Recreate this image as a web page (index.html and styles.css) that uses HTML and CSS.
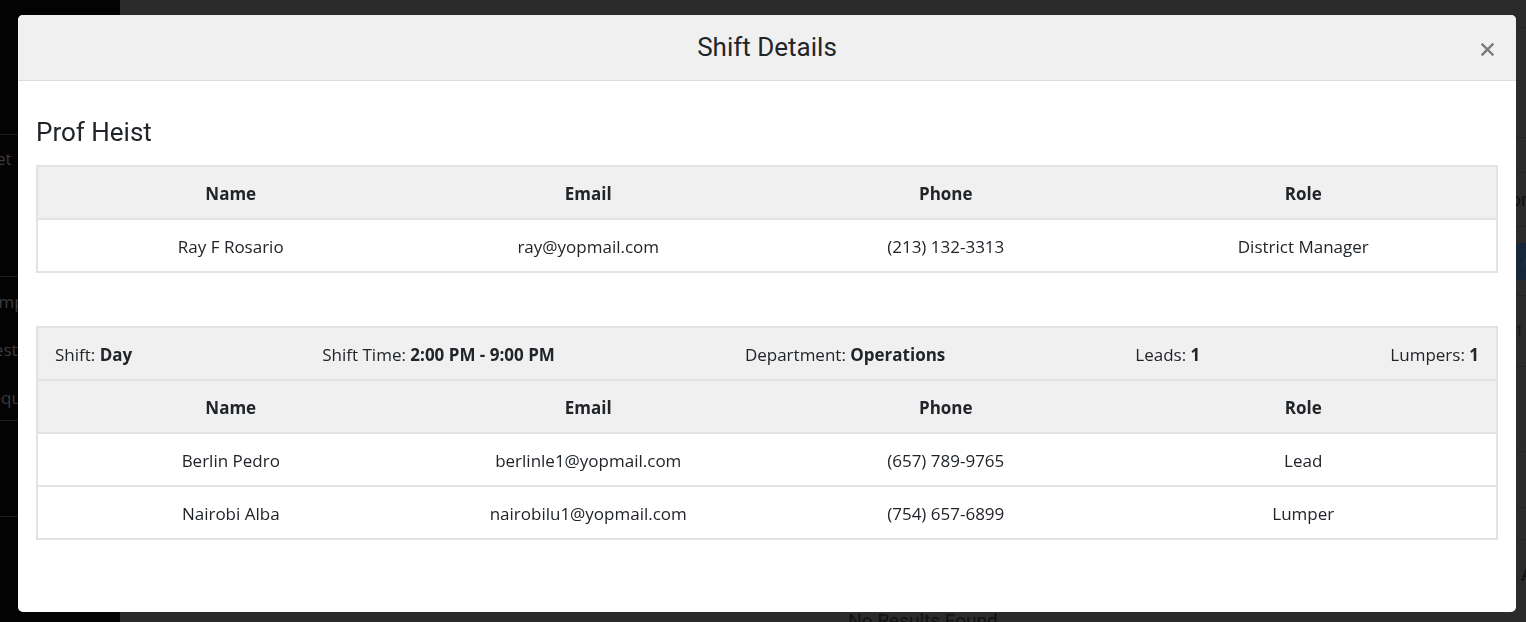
FILE: index.html
```html
<!DOCTYPE html>
<html lang="en">
<head>
<meta charset="utf-8">
<title>Shift Details</title>
<link rel="stylesheet" href="styles.css">
</head>
<body>
<div class="page">
  <aside class="sidebar">
    <div class="brand"></div>
    <div class="nav-group g1">
      <span class="nav-item off-a">Timesheet</span>
    </div>
    <div class="nav-group g2">
      <span class="nav-item off-b">Employees</span>
      <span class="nav-item off-c">Requests</span>
      <span class="nav-item off-d">Requisitions</span>
    </div>
    <div class="nav-group g3"></div>
  </aside>
  <main class="main">
    <div class="bg-row r-top"></div>
    <div class="bg-row r-1"></div>
    <div class="bg-row r-2"></div>
    <div class="bg-row r-3"><span class="bg-title">Section</span></div>
    <div class="bg-row r-4"><span class="bg-btn">Add</span></div>
    <div class="bg-row r-5"><span class="bg-num">1</span></div>
    <div class="bg-row r-6"></div>
    <div class="bg-row r-7"></div>
    <div class="bg-row r-8"></div>
    <div class="bg-row r-9"><span class="bg-a">A</span></div>
    <div class="bg-empty">No Results Found</div>
  </main>
</div>

<div class="modal">
  <div class="modal-header">
    <h2 class="modal-title">Shift Details</h2>
    <span class="close" aria-label="Close">
      <svg width="13" height="13" viewBox="0 0 13 13"><path d="M1.5 1.5 L11.5 11.5 M11.5 1.5 L1.5 11.5" stroke="#7a7a7a" stroke-width="2.4" stroke-linecap="square" fill="none"/></svg>
    </span>
  </div>
  <div class="modal-body">
    <h3 class="section-title">Prof Heist</h3>
    <div class="tbl">
      <div class="tr thead">
        <div>Name</div><div>Email</div><div>Phone</div><div>Role</div>
      </div>
      <div class="tr">
        <div>Ray F Rosario</div><div>ray@yopmail.com</div><div>(213) 132-3313</div><div>District Manager</div>
      </div>
    </div>

    <div class="tbl tbl-2">
      <div class="info">
        <span>Shift: <b>Day</b></span>
        <span>Shift Time: <b>2:00 PM - 9:00 PM</b></span>
        <span>Department: <b>Operations</b></span>
        <span>Leads: <b>1</b></span>
        <span>Lumpers: <b>1</b></span>
      </div>
      <div class="tr thead">
        <div>Name</div><div>Email</div><div>Phone</div><div>Role</div>
      </div>
      <div class="tr">
        <div>Berlin Pedro</div><div>berlinle1@yopmail.com</div><div>(657) 789-9765</div><div>Lead</div>
      </div>
      <div class="tr">
        <div>Nairobi Alba</div><div>nairobilu1@yopmail.com</div><div>(754) 657-6899</div><div>Lumper</div>
      </div>
    </div>
  </div>
</div>
</body>
</html>
```

FILE: styles.css
```css
* { box-sizing: border-box; }
html, body { margin: 0; padding: 0; height: 100%; }
body {
  background: #2b2b2b;
  font-family: "Open Sans", "Liberation Sans", sans-serif;
  color: #212529;
  overflow: hidden;
}

/* ---------- dimmed background page ---------- */
.page { display: flex; height: 622px; }

.sidebar {
  width: 120px;
  flex: none;
  background: #030303;
  color: #3b3b3b;
  font-size: 17px;
  display: flex;
  flex-direction: column;
  overflow: hidden;
}
.brand { height: 135px; border-bottom: 1px solid #1c1c1c; flex: none; }
.nav-group {
  flex: none;
  display: flex;
  flex-direction: column;
  border-bottom: 1px solid #1c1c1c;
}
.g1 { height: 142px; padding-top: 12px; }
.g2 { height: 144px; padding-top: 13px; gap: 24px; }
.g3 { height: 96px; }
.nav-item { white-space: nowrap; line-height: 24px; }
.off-a { margin-left: -71px; }
.off-b { margin-left: -11px; }
.off-c { margin-left: -47px; }
.off-d { margin-left: -19px; }

.main {
  flex: 1;
  display: flex;
  flex-direction: column;
  overflow: hidden;
  min-width: 0;
}
.bg-row {
  flex: none;
  display: flex;
  align-items: center;
  justify-content: flex-end;
  border-bottom: 1px solid #232323;
}
.r-top { height: 28px; }
.r-1 { height: 110px; }
.r-2 { height: 35px; }
.r-3 { height: 54px; }
.r-4 { height: 69px; }
.r-5 { height: 71px; }
.r-6 { height: 85px; }
.r-7 { height: 56px; }
.r-8 { height: 32px; }
.r-9 { height: 40px; }
.bg-title {
  font-family: Roboto, sans-serif;
  font-size: 18px;
  font-weight: 500;
  color: #141414;
  margin-right: -5px;
}
.bg-btn {
  display: inline-flex;
  align-items: center;
  height: 37px;
  padding: 0 14px;
  margin-right: -40px;
  border-radius: 5px;
  background: #17263a;
  color: #1f2f44;
}
.bg-num { color: #181818; font-size: 16px; margin-right: 2px; }
.bg-a { color: #111; font-family: Roboto, sans-serif; font-size: 20px; margin-right: -8px; margin-top: 28px; }
.bg-empty {
  text-align: center;
  font-family: Roboto, "Liberation Sans", sans-serif;
  font-size: 19px;
  color: #111;
  margin-top: 29px;
  padding-left: 200px;
}

/* ---------- modal ---------- */
.modal {
  position: fixed;
  left: 18px;
  top: 15px;
  width: 1498px;
  background: #fff;
  border-radius: 5px;
  overflow: hidden;
}
.modal-header {
  position: relative;
  height: 66px;
  background: #f0f0f0;
  border-bottom: 1px solid #dcdcdc;
  display: flex;
  align-items: center;
  justify-content: center;
}
.modal-title {
  margin: 0;
  font-family: Roboto, "Liberation Sans", sans-serif;
  font-size: 26px;
  font-weight: 400;
  line-height: 31px;
  color: #212529;
}
.close {
  position: absolute;
  right: 22px;
  top: 28px;
  width: 13px;
  height: 13px;
  display: block;
}
.close svg { display: block; }

.modal-body { padding: 36px 18px 72px; }
.section-title {
  margin: 0 0 17px;
  font-family: Roboto, "Liberation Sans", sans-serif;
  font-size: 26px;
  font-weight: 400;
  line-height: 31px;
  color: #212529;
}

.tbl {
  border: 2px solid #e3e3e3;
  border-bottom: none;
  font-size: 17px;
}
.tbl-2 { margin-top: 53px; }
.tr {
  display: grid;
  grid-template-columns: repeat(4, 1fr);
  align-items: center;
  text-align: center;
  height: 53px;
  padding: 2px 14px 0;
  border-bottom: 2px solid #e3e3e3;
}
.thead { background: #f0f0f0; font-weight: 700; }
.info {
  display: flex;
  justify-content: space-between;
  align-items: center;
  height: 53px;
  padding: 2px 17px 0;
  background: #f0f0f0;
  border-bottom: 2px solid #e3e3e3;
}
.info b { font-weight: 700; }
```
